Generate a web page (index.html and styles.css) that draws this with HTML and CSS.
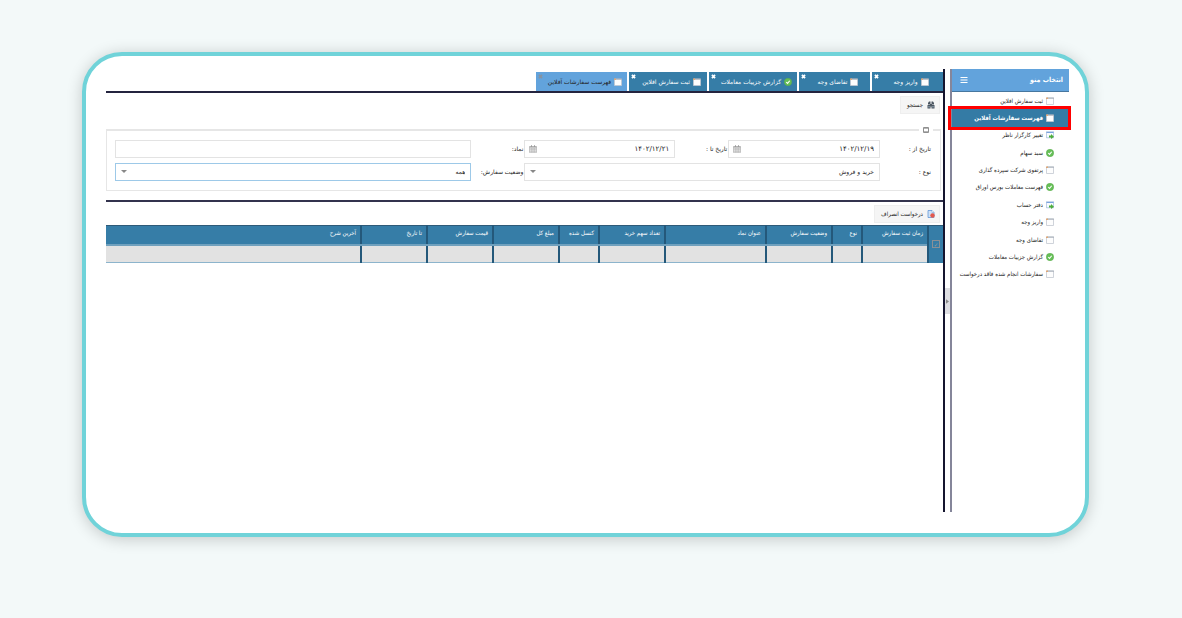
FILE: index.html
```html
<!DOCTYPE html>
<html lang="fa" dir="rtl">
<head>
<meta charset="utf-8">
<title>فهرست سفارشات آفلاین</title>
<link rel="stylesheet" href="styles.css">
</head>
<body>
<svg class="defs" aria-hidden="true">
  <symbol id="win" viewBox="0 0 8 8"><path d="M.5 1h7v6.500h-7z" fill="#fdfdfd" stroke="#c3c8d0" stroke-width=".8"/><path d="M1 .6h7v1H1z" fill="#a3abb6"/><path d="M0 .5h2v1.500H0z" fill="#dfa878"/></symbol>
  <symbol id="wingo" viewBox="0 0 16 16"><path d="M.7 1.500h14.600v12H.7z" fill="#f7fbff" stroke="#6f94c8"/><path d="M1 2h14v2H1z" fill="#7ba4de"/><path d="M6 9h4V6l6 5.500-6 4.500v-3H6z" fill="#4fae3c"/></symbol>
  <symbol id="ok" viewBox="0 0 16 16"><circle cx="8" cy="8" r="7.400" fill="#66bf58" stroke="#58ab4b"/><path d="M4.500 8l2.500 2.800L11.500 5.500" fill="none" stroke="#fff" stroke-width="2.200"/></symbol>
  <symbol id="cal" viewBox="0 0 16 16"><path d="M1 3h14v12.300H1zM1 6.500h14M1 9.500h14M1 12.500h14M4.500 6v9M8 6v9M11.500 6v9" fill="none" stroke="#9a9a9a"/><path d="M1 3h14v2H1zM4 .5h2V4H4zM10 .5h2V4h-2z" fill="#9a9a9a"/></symbol>
  <symbol id="close" viewBox="0 0 8 8"><path d="M1.500 1.500l5 5M6.500 1.500l-5 5" stroke="currentColor" stroke-width="2.800"/></symbol>
</svg>
<main class="card">
  <aside class="sidebar">
    <header class="side-head">
      <h1>انتخاب منو</h1>
      <button class="burger" aria-label="منو"><svg viewBox="0 0 8 8"><path d="M.5 1.500h7M.5 4h7M.5 6.500h7" stroke="#fff" stroke-width="1.200"/></svg></button>
    </header>
    <nav>
      <ul class="menu">
        <li><a href="#"><svg><use href="#win"/></svg>ثبت سفارش افلاین</a></li>
        <li class="selected"><a href="#"><svg><use href="#win"/></svg>فهرست سفارشات آفلاین</a><span class="marker"></span></li>
        <li><a href="#"><svg><use href="#wingo"/></svg>تغییر کارگزار ناظر</a></li>
        <li><a href="#"><svg><use href="#ok"/></svg>سبد سهام</a></li>
        <li><a href="#"><svg><use href="#win"/></svg>پرتفوی شرکت سپرده گذاری</a></li>
        <li><a href="#"><svg><use href="#ok"/></svg>فهرست معاملات بورس اوراق</a></li>
        <li><a href="#"><svg><use href="#wingo"/></svg>دفتر حساب</a></li>
        <li><a href="#"><svg><use href="#win"/></svg>واریز وجه</a></li>
        <li><a href="#"><svg><use href="#win"/></svg>تقاضای وجه</a></li>
        <li><a href="#"><svg><use href="#ok"/></svg>گزارش جزییات معاملات</a></li>
        <li><a href="#"><svg><use href="#win"/></svg>سفارشات انجام شده فاقد درخواست</a></li>
      </ul>
    </nav>
  </aside>
  <div class="splitter"><button aria-label="جمع کردن منو"><svg viewBox="0 0 4 6"><path d="M0 0l4 3-4 3z" fill="#888"/></svg></button></div>
  <section class="content">
    <div class="tabs">
      <div class="tab w-s"><svg><use href="#win"/></svg><span>واریز وجه</span><button class="x" aria-label="بستن"><svg><use href="#close"/></svg></button></div>
      <div class="tab w-s"><svg><use href="#win"/></svg><span>تقاضای وجه</span><button class="x" aria-label="بستن"><svg><use href="#close"/></svg></button></div>
      <div class="tab w-l"><svg><use href="#ok"/></svg><span>گزارش جزییات معاملات</span><button class="x" aria-label="بستن"><svg><use href="#close"/></svg></button></div>
      <div class="tab w-m"><svg><use href="#win"/></svg><span>ثبت سفارش افلاین</span><button class="x" aria-label="بستن"><svg><use href="#close"/></svg></button></div>
      <div class="tab w-xl active"><svg><use href="#win"/></svg><span>فهرست سفارشات آفلاین</span><button class="x" aria-label="بستن"><svg><use href="#close"/></svg></button></div>
    </div>
    <div class="panel">
      <div class="toolbar">
        <button class="tool"><svg viewBox="0 0 16 16"><path d="M2 7V4l2-3h3v6zM9 7V1h3l2 3v3zM1 8h6v7H1zM9 8h6v7H9zM6 6h4v5H6z" fill="#4b5560"/><path d="M3 10h2v3H3zM11 10h2v3h-2z" fill="#a6bccb"/></svg>جستجو</button>
      </div>
      <form class="filters">
        <button type="button" class="collapse" aria-label="جمع کردن"><svg viewBox="0 0 6 6"><path d="M.5.5h5v5h-5z" fill="#fff" stroke="#8f8f8f"/><path d="M1 1.500h4M1 4.500h4" stroke="#b5b5b5"/></svg></button>
        <label for="from">تاریخ از :</label>
        <div class="field"><input id="from" class="date" dir="ltr" value="۱۴۰۲/۱۲/۱۹"><svg class="cal"><use href="#cal"/></svg></div>
        <label for="to">تاریخ تا :</label>
        <div class="field"><input id="to" class="date" dir="ltr" value="۱۴۰۲/۱۲/۲۱"><svg class="cal"><use href="#cal"/></svg></div>
        <label for="symbol">نماد:</label>
        <div class="field"><input id="symbol"></div>
        <label for="type">نوع :</label>
        <div class="field wide"><select id="type"><option>خرید و فروش</option></select><i class="arrow"></i></div>
        <label for="state">وضعیت سفارش:</label>
        <div class="field focus"><select id="state"><option>همه</option></select><i class="arrow"></i></div>
      </form>
    </div>
    <div class="results">
      <div class="toolbar">
        <button class="tool"><svg viewBox="0 0 16 16"><path d="M2 1h8l4 4v10H2z" fill="#cfe2f7" stroke="#5b93d6" stroke-width="1.500"/><path d="M10 1v4h4" fill="#fff" stroke="#6f9bd0"/><circle cx="11" cy="11" r="4.500" fill="#e2584d"/></svg>درخواست انصراف</button>
      </div>
      <table>
        <colgroup><col class="c-check"><col class="c-m"><col class="c-xs"><col class="c-m"><col class="c-l"><col class="c-m"><col class="c-s"><col class="c-m"><col class="c-m"><col class="c-m"><col></colgroup>
        <thead>
          <tr><th rowspan="2" class="check"><input type="checkbox" checked aria-label="انتخاب همه"></th><th>زمان ثبت سفارش</th><th>نوع</th><th>وضعیت سفارش</th><th>عنوان نماد</th><th>تعداد سهم خرید</th><th>کنسل شده</th><th>مبلغ کل</th><th>قیمت سفارش</th><th>تا تاریخ</th><th>آخرین شرح</th></tr>
          <tr class="blank"><td></td><td></td><td></td><td></td><td></td><td></td><td></td><td></td><td></td><td></td></tr>
        </thead>
      </table>
    </div>
  </section>
</main>
</body>
</html>
```
FILE: styles.css
```css
* { box-sizing: border-box; }
body {
  margin: 0;
  padding: 52px 93px 81px 82px;
  min-height: 100vh;
  display: flex;
  background: #f3f9f9;
  color: #222;
  font: 6px/10px "DejaVu Sans", sans-serif;
}
svg { display: block; flex: none; width: 8px; height: 8px; }
.defs { position: absolute; width: 0; height: 0; }
button, input, select { font: inherit; color: inherit; margin: 0; padding: 0; border: 0; background: none; }
a { color: inherit; text-decoration: none; }
h1, th, .tool, .menu { font-family: "DejaVu Sans Condensed", "DejaVu Sans", sans-serif; }

.card {
  flex: 1;
  display: flex;
  padding: 13px 16px 21px 20px;
  background: #fff;
  border: 4px solid #70d3d9;
  border-radius: 40px;
  box-shadow: 0 2px 16px rgba(0, 0, 0, .2);
}

.sidebar { flex: none; width: 119px; border-left: 2px solid #85869a; }
.side-head {
  height: 23px;
  padding: 0 6px 0 8px;
  display: flex;
  align-items: center;
  justify-content: space-between;
  background: #62a3dc;
  border-bottom: 1px solid #47779f;
  color: #fff;
}
h1 { margin: 0; font-size: 7px; }
.menu {
  height: 191px;
  margin: 0;
  padding: 0;
  list-style: none;
  display: grid;
  grid-template: repeat(11, 1fr) / minmax(0, 1fr);
}
.menu li { position: relative; display: flex; }
.menu a { flex: 1; display: flex; align-items: center; gap: 3px; padding-right: 15px; white-space: nowrap; }
.menu .selected { background: #347ba5; color: #fff; font-weight: bold; }
.marker { position: absolute; inset: -3px -2px -3px -4px; border: 3px solid #f00; }

.splitter { flex: none; width: 5px; display: flex; align-items: center; padding-top: 21px; }
.splitter button { width: 5px; height: 26px; background: #dedee2; display: flex; align-items: center; justify-content: center; }
.splitter svg { width: 3px; height: 5px; }

.content { flex: 1; min-width: 0; padding-top: 3px; border-right: 2px solid #15152f; }
.tabs { display: flex; gap: 2px; border-bottom: 2px solid #24243f; }
.tab {
  position: relative;
  height: 19px;
  padding: 0 6px 0 13px;
  display: flex;
  align-items: center;
  justify-content: center;
  gap: 3px;
  background: #367da7;
  color: #fff;
  white-space: nowrap;
}
.w-s { width: 71px; }
.w-m { width: 78px; }
.w-l { width: 88px; }
.w-xl { width: 91px; }
.tab.active { background: #62a3dc; color: #222; }
.x { position: absolute; top: 2px; left: 2px; }
.x svg { width: 5px; height: 5px; }
.active .x { color: #8493a3; }

.toolbar { padding: 3px 3px 2px; display: flex; }
.tool {
  height: 18px;
  padding: 0 4px 0 6px;
  display: flex;
  align-items: center;
  gap: 4px;
  background: #f5f5f5;
  border: 1px solid #eee;
}

.filters {
  position: relative;
  margin: 13px 2px 9px 0;
  padding: 9px 8px;
  display: grid;
  grid-template-columns: 52px 152fr 53px 151fr 53px 357fr;
  row-gap: 5px;
  align-items: center;
  border: 1px solid #e6e6e6;
  border-top-width: 2px;
}
.collapse { position: absolute; top: -4px; right: 7px; padding: 0 4px; background: #fff; }
.collapse svg { width: 6px; height: 6px; }
label { padding-right: 1px; white-space: nowrap; }
.field { position: relative; height: 18px; display: flex; border: 1px solid #e3e3e3; }
.field input, .field select { flex: 1; min-width: 0; padding: 0 5px; text-align: right; appearance: none; outline: 0; }
.field .date { font-size: 7px; }
.wide { grid-column: span 3; }
.focus { border-color: #9dc9e8; }
.cal { position: absolute; left: 4px; top: 4px; }
.arrow { position: absolute; left: 5px; top: 6px; border: 3px solid transparent; border-top-color: #888; border-bottom: 0; }

.results { border-top: 2px solid #33334d; }
table { width: 100%; table-layout: fixed; border-collapse: collapse; }
.c-check { width: 15px; }
.c-xs { width: 30px; }
.c-s { width: 40px; }
.c-m { width: 66px; }
.c-l { width: 101px; }
th {
  height: 19px;
  padding: 0 4px 3px 0;
  background: #367da7;
  border-left: 2px solid #24587a;
  border-bottom: 2px solid #6fa0bd;
  border-top: 1px solid #2e5a78;
  color: #fff;
  font-weight: normal;
  line-height: 8px;
  text-align: right;
  white-space: nowrap;
}
.blank td { height: 18px; background: #e2e2e2; border-left: 2px solid #24587a; border-bottom: 1px solid #8cb4cc; }
th:last-child, .blank td:last-child { border-left: 0; }
.check { padding: 0; text-align: center; border-bottom: 0; }
.check input { width: 8px; height: 8px; vertical-align: middle; appearance: none; border: 1px solid #8a9096; display: inline-grid; place-items: center; }
.check input::before { content: "✓"; color: #9aa0a5; }
```
